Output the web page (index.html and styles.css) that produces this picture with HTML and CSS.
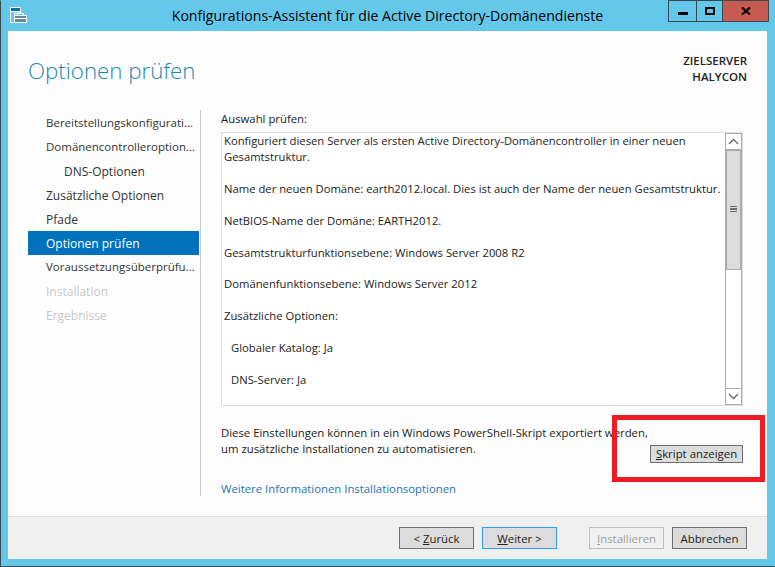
FILE: index.html
```html
<!DOCTYPE html>
<html lang="de">
<head>
<meta charset="utf-8">
<title>Konfigurations-Assistent für die Active Directory-Domänendienste</title>
<link rel="stylesheet" href="styles.css">
</head>
<body>
<div class="window">
  <header class="titlebar">
    <svg class="app-icon" width="17" height="16" viewBox="0 0 17 16">
      <path d="M0.500 0.500H10.500V6H4.500V15.500H0.500Z" fill="#63c8ea" stroke="#fff"/>
      <rect x="1" y="1" width="9" height="3" fill="#0e6fb2"/>
      <path d="M1 4.500H10" stroke="#fff"/>
      <rect x="4.500" y="8.500" width="12" height="7" fill="#6b8797" stroke="#fff"/>
      <path d="M7.500 8.500V6.500H13.500V8.500" fill="none" stroke="#fff"/>
      <path d="M5 11.500H16" stroke="#fff"/>
    </svg>
    <h1 class="title">Konfigurations-Assistent für die Active Directory-Domänendienste</h1>
    <div class="caption">
      <div class="cap-btn cap-min"><span class="min-glyph"></span></div>
      <div class="cap-btn cap-max"><span class="max-glyph"></span></div>
      <div class="cap-btn cap-close">
        <svg width="10" height="8" viewBox="0 0 10 8"><path d="M1 0.500L9 7.500M9 0.500L1 7.500" stroke="#000" stroke-width="2.200" fill="none"/></svg>
      </div>
    </div>
  </header>
  <main class="client">
    <div class="head">
      <div class="page-title">Optionen prüfen</div>
      <div class="server">ZIELSERVER<br>HALYCON</div>
    </div>
    <div class="body">
      <nav class="nav">
        <div class="nav-item long">Bereitstellungskonfigurati...</div>
        <div class="nav-item long">Domänencontrolleroption...</div>
        <div class="nav-item sub">DNS-Optionen</div>
        <div class="nav-item">Zusätzliche Optionen</div>
        <div class="nav-item">Pfade</div>
        <div class="nav-item selected">Optionen prüfen</div>
        <div class="nav-item long">Voraussetzungsüberprüfu...</div>
        <div class="nav-item disabled">Installation</div>
        <div class="nav-item disabled">Ergebnisse</div>
      </nav>
      <section class="content">
        <div class="label">Auswahl prüfen:</div>
        <div class="review">
          <div class="review-text">
            <p>Konfiguriert diesen Server als ersten Active Directory-Domänencontroller in einer neuen<br>Gesamtstruktur.</p>
            <p>Name der neuen Domäne: earth2012.local. Dies ist auch der Name der neuen Gesamtstruktur.</p>
            <p>NetBIOS-Name der Domäne: EARTH2012.</p>
            <p>Gesamtstrukturfunktionsebene: Windows Server 2008 R2</p>
            <p>Domänenfunktionsebene: Windows Server 2012</p>
            <p>Zusätzliche Optionen:</p>
            <p class="indent">Globaler Katalog: Ja</p>
            <p class="indent">DNS-Server: Ja</p>
          </div>
          <div class="scrollbar">
            <div class="arrow">
              <svg width="11" height="7" viewBox="0 0 11 7"><path d="M1 6L5.500 1.500L10 6" fill="none" stroke="#666" stroke-width="1.300"/></svg>
            </div>
            <div class="track">
              <div class="thumb">
                <span class="grip"></span><span class="grip"></span><span class="grip"></span>
              </div>
            </div>
            <div class="arrow">
              <svg width="11" height="7" viewBox="0 0 11 7"><path d="M1 1L5.500 5.500L10 1" fill="none" stroke="#666" stroke-width="1.300"/></svg>
            </div>
          </div>
        </div>
        <div class="export">
          <div class="export-text">Diese Einstellungen können in ein Windows PowerShell-Skript exportiert werden,<br>um zusätzliche Installationen zu automatisieren.</div>
          <button class="btn btn-script"><u>S</u>kript anzeigen</button>
        </div>
        <a class="more" href="#">Weitere Informationen Installationsoptionen</a>
      </section>
    </div>
    <footer class="footer">
      <button class="btn wide">&lt; <u>Z</u>urück</button>
      <button class="btn wide default"><u>W</u>eiter &gt;</button>
      <button class="btn install" disabled><u>I</u>nstallieren</button>
      <button class="btn cancel">Abbrechen</button>
    </footer>
  </main>
  <div class="highlight"></div>
</div>
</body>
</html>
```
FILE: styles.css
```css
* { box-sizing: border-box; }
html, body { margin: 0; padding: 0; }
body {
  width: 775px;
  height: 567px;
  overflow: hidden;
  font-family: "Open Sans", "Noto Sans", sans-serif;
  font-size: 11.5px;
  color: #222;
}
.window {
  position: relative;
  width: 775px;
  height: 567px;
  background: #63c8ea;
  border: 1px solid #3d4a52;
  border-top-color: #63c8ea;
  border-right-color: #63c8ea;
  display: flex;
  flex-direction: column;
  padding: 0 7px 7px 7px;
}
.titlebar {
  height: 30px;
  flex: none;
  display: flex;
  align-items: flex-start;
  position: relative;
}
.app-icon { margin: 6px 0 0 2px; flex: none; }
.title {
  position: absolute;
  left: 0;
  right: 0;
  top: 5px;
  margin: 0;
  text-align: center;
  font-size: 14.1px;
  font-weight: 400;
  line-height: 20px;
  color: #000;
}
.caption {
  position: absolute;
  right: -2px;
  top: -1px;
  height: 22px;
  display: flex;
  border: 1px solid #3a4750;
}
.cap-btn { display: flex; align-items: center; justify-content: center; height: 100%; }
.cap-min { width: 28px; border-right: 1px solid #3a4750; }
.cap-max { width: 26px; border-right: 1px solid #3a4750; }
.cap-close { width: 45px; background: #c75b50; }
.min-glyph { width: 10px; height: 3px; background: #000; margin-top: 5px; }
.max-glyph { width: 10px; height: 8px; border: 2px solid #000; }
.client {
  flex: 1;
  background: #fdfdfd;
  display: flex;
  flex-direction: column;
  min-height: 0;
}
.head {
  height: 79px;
  flex: none;
  display: flex;
  justify-content: space-between;
  padding: 22px 20px 0 20px;
}
.page-title {
  font-size: 22.3px;
  line-height: 36px;
  font-weight: 300;
  color: #1e88b4;
  font-family: "Open Sans", sans-serif;
}
.server {
  text-align: right;
  font-size: 11.5px;
  line-height: 16px;
  font-weight: 600;
  color: #222;
  margin-top: 0;
}
.body {
  flex: 1;
  display: flex;
  min-height: 0;
  padding-left: 20px;
}
.nav {
  width: 173px;
  flex: none;
  padding-top: 1px;
  border-right: 1px solid #c8c8c8;
  height: 386px;
}
.nav-item {
  width: 171px;
  height: 24px;
  line-height: 26px;
  padding-left: 18px;
  white-space: nowrap;
  color: #333;
  font-size: 12px;
}
.nav-item.long { font-size: 11.5px; line-height: 24px; }
.nav-item.sub { padding-left: 36px; }
.nav-item.selected { background: #0072bc; color: #fff; }
.nav-item.disabled { color: #c8c8c8; }
.content {
  flex: 1;
  min-width: 0;
  padding: 0 0 0 20px;
  display: flex;
  flex-direction: column;
  align-items: flex-start;
  font-size: 11.35px;
}
.label { line-height: 16px; height: 21px; margin-top: 1px; }
.review {
  width: 522px;
  height: 274px;
  border: 1px solid #dcdcdc;
  background: #fff;
  display: flex;
  flex: none;
}
.review-text {
  flex: 1;
  padding: 0 0 0 2px;
  line-height: 15.93px;
  white-space: nowrap;
  overflow: hidden;
  font-size: 11.28px;
}
.review-text p { margin: 0 0 15.93px; }
.review-text .indent { padding-left: 7px; }
.scrollbar {
  width: 17px;
  flex: none;
  display: flex;
  flex-direction: column;
  border-left: 1px solid #ababab;
  border-right: 1px solid #ababab;
  margin: 0;
}
.arrow {
  height: 17px;
  flex: none;
  display: flex;
  align-items: center;
  justify-content: center;
  border: 1px solid #ababab;
  border-left: 0;
  border-right: 0;
  background: #fff;
}
.track { flex: 1; background: #fff; }
.thumb {
  height: 120px;
  background: #dcdcdc;
  border: 1px solid #ababab;
  display: flex;
  flex-direction: column;
  align-items: center;
  justify-content: center;
  gap: 1px;
  padding-bottom: 2px;
}
.grip { width: 7px; height: 1.500px; background: #707070; }
.export {
  display: flex;
  width: 522px;
  position: relative;
  padding-top: 19px;
  height: 75px;
  flex: none;
  line-height: 16px;
}
.export-text { white-space: nowrap; }
.btn {
  font-family: inherit;
  font-size: 11.4px;
  color: #222;
  background: #dcdcdc;
  border: 1px solid #707070;
  padding: 0;
  height: 22px;
  margin: 0;
}
.btn-script {
  position: absolute;
  left: 429px;
  top: 39px;
  width: 93px;
  height: 18px;
  line-height: 14px;
}
.more { color: #1e73be; text-decoration: none; line-height: 16px; }
.footer {
  margin-top: auto;
  height: 43px;
  flex: none;
  background: #f0f0f0;
  border-top: 1px solid #dfdfdf;
  display: flex;
  align-items: flex-start;
  padding: 10px 0 0 391px;
  gap: 8px;
}
.wide { width: 75px; }
.default { border-color: #3399ff; }
.install { width: 75px; background: #f0f0f0; border-color: #bdbdbd; color: #a0a0a0; margin-left: 24px; }
.cancel { width: 75px; }
.highlight {
  position: absolute;
  left: 611px;
  top: 414px;
  width: 153px;
  height: 67px;
  border: 5px solid #ed1c24;
}
```
